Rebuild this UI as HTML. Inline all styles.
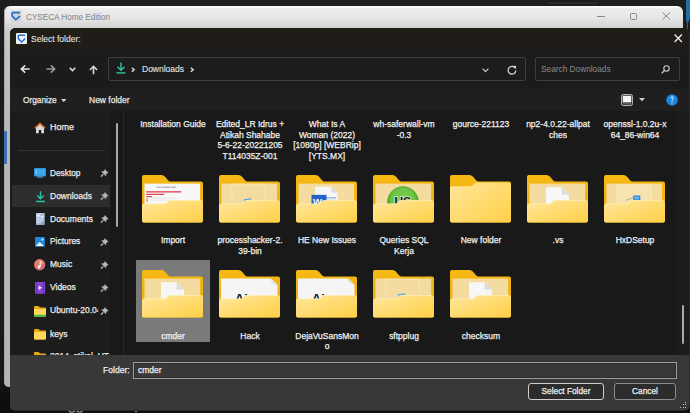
<!DOCTYPE html>
<html><head><meta charset="utf-8"><style>
html,body{margin:0;padding:0;width:690px;height:413px;overflow:hidden;background:#1b1b1b;}
.r{position:absolute;display:block;}
.t{position:absolute;white-space:nowrap;line-height:1;font-family:"Liberation Sans", sans-serif;-webkit-text-stroke:0.25px currentColor;}
svg.r{overflow:visible;}
</style></head><body>
<div class="r" style="left:0px;top:0px;width:690px;height:413px;background:linear-gradient(#1e1e1e 0, #1b1b1b 30px, #191919 380px, #0e0e0e 395px, #0e0e0e);"></div>
<div class="r" style="left:548px;top:2px;width:50px;height:2px;background:#2a2a2a;"></div>
<div class="r" style="left:685.5px;top:0px;width:4.5px;height:18.5px;background:#1c70a8;"></div>
<div class="r" style="left:686.3px;top:18.5px;width:2.6px;height:3px;background:#1c6aa0;"></div>
<div class="r" style="left:686.8px;top:21.5px;width:1.6px;height:8.5px;background:#1c669a;"></div>
<div class="r" style="left:4px;top:6px;width:679px;height:381px;background:linear-gradient(#fbfbfb 0,#fbfbfb 1px,#ececec 3px,#e6e6e6 12px,#d0d0d0 22px,#c4c4c4 40px,#b7b9b9 120px,#b3b5b5);border-radius:6px 6px 5px 5px;box-shadow:inset 1px 0 0 #a8a8a8;"></div>
<div class="r" style="left:4px;top:131px;width:3px;height:33px;background:#3d6fb5;"></div>
<svg class="r" style="left:11px;top:11px" width="10" height="10.5" viewBox="0 0 10 10.5"><rect x="-0.5" y="-0.5" width="11" height="11" rx="1" fill="#d4d4d4"/><path d="M1.2 1.7 H9 M1.2 1.7 V5 L4.7 8.6 L9 5.1" stroke="#1a6fcf" stroke-width="1.7" fill="none" stroke-linejoin="miter"/></svg>
<div class="t" style="left:26.00px;top:11.62px;font-size:9.78px;color:#8a8a8a;transform:scaleX(0.8333);transform-origin:left 50%;-webkit-text-stroke:0.1px currentColor;">CYSECA Home Edition</div>
<div class="r" style="left:597px;top:16px;width:7.5px;height:1px;background:#8a8a8a;"></div>
<div class="r" style="left:629.5px;top:12.5px;width:7px;height:7px;background:transparent;border:1px solid #8a8a8a;border-radius:1.5px;box-sizing:border-box;"></div>
<svg class="r" style="left:662px;top:12px" width="8.5" height="8" viewBox="0 0 8.5 8"><path d="M0.5 0.5 L8 7.5 M8 0.5 L0.5 7.5" stroke="#8a8a8a" stroke-width="1"/></svg>
<div class="r" style="left:9.5px;top:27.5px;width:680px;height:383px;background:#2a2a2a;border-radius:6px;"></div>
<div class="r" style="left:10px;top:28px;width:678.5px;height:382px;background:#1c1c1c;border-radius:5.5px;overflow:hidden;"></div>
<div class="r" style="left:10px;top:28px;width:678.5px;height:21px;background:#201c17;border-radius:5.5px 5.5px 0 0;"></div>
<svg class="r" style="left:16px;top:32.5px" width="11" height="11" viewBox="0 0 11 11"><rect x="0" y="0" width="11" height="11" rx="1" fill="#f0f0f0"/><path d="M2.3 2.3 H9.1 M2.3 2.3 V5.6 L5.7 8.9 L9.1 5.6" stroke="#1f72d2" stroke-width="1.4" fill="none"/></svg>
<div class="t" style="left:31.30px;top:34.73px;font-size:9.18px;color:#e4e4e4;transform:scaleX(0.9259);transform-origin:left 50%;-webkit-text-stroke:0.1px currentColor;">Select folder:</div>
<svg class="r" style="left:673.5px;top:34px" width="8.5" height="8.5" viewBox="0 0 8.5 8.5"><path d="M0.6 0.6 L7.9 7.9 M7.9 0.6 L0.6 7.9" stroke="#ececec" stroke-width="1.35"/></svg>
<div class="r" style="left:10px;top:49px;width:679px;height:39.5px;background:#1b1b1b;"></div>
<svg class="r" style="left:20px;top:64px" width="10" height="10" viewBox="0 0 10 10"><path d="M9.6 5 H1.8 M5.2 1.3 L1.3 5 L5.2 8.7" stroke="#e6e6e6" stroke-width="1.6" fill="none"/></svg>
<svg class="r" style="left:45.5px;top:64px" width="10" height="10" viewBox="0 0 10 10"><path d="M0.4 5 H8.2 M4.8 1.3 L8.7 5 L4.8 8.7" stroke="#9a9a9a" stroke-width="1.6" fill="none"/></svg>
<svg class="r" style="left:68.5px;top:66.8px" width="7" height="5" viewBox="0 0 7 5"><path d="M0.7 0.8 L3.5 3.6 L6.3 0.8" stroke="#e0e0e0" stroke-width="1.5" fill="none"/></svg>
<svg class="r" style="left:88.5px;top:64.5px" width="9" height="9.5" viewBox="0 0 9 9.5"><path d="M4.5 9.3 V1.8 M0.9 5 L4.5 1.3 L8.1 5" stroke="#d8d8d8" stroke-width="1.6" fill="none"/></svg>
<div class="r" style="left:108px;top:57px;width:418px;height:24px;background:#1c1c1c;border:1.3px solid #3e3e3e;border-radius:2px;box-sizing:border-box;"></div>
<svg class="r" style="left:116px;top:62px" width="10" height="12" viewBox="0 0 10 12"><path d="M5 0.5 V8 M1.5 4.8 L5 8.3 L8.5 4.8" stroke="#2ec4a2" stroke-width="1.4" fill="none"/><rect x="0.5" y="10.2" width="9" height="1.4" fill="#2ec4a2"/></svg>
<svg class="r" style="left:131px;top:66.8px" width="4.5" height="5.5" viewBox="0 0 4.5 5.5"><path d="M0.8 0.7 L3.2 2.75 L0.8 4.8" stroke="#e0e0e0" stroke-width="1.4" fill="none"/></svg>
<div class="t" style="left:141.50px;top:64.83px;font-size:9.18px;color:#e4e4e4;transform:scaleX(0.9259);transform-origin:left 50%;-webkit-text-stroke:0.1px currentColor;">Downloads</div>
<svg class="r" style="left:189.5px;top:66.8px" width="4.5" height="5.5" viewBox="0 0 4.5 5.5"><path d="M0.8 0.7 L3.2 2.75 L0.8 4.8" stroke="#e0e0e0" stroke-width="1.4" fill="none"/></svg>
<svg class="r" style="left:481.5px;top:67.5px" width="7" height="4.5" viewBox="0 0 7 4.5"><path d="M0.6 0.6 L3.5 3.6 L6.4 0.6" stroke="#cfcfcf" stroke-width="1.1" fill="none"/></svg>
<svg class="r" style="left:506.5px;top:64.5px" width="10" height="10" viewBox="0 0 10 10"><path d="M8.3 3.2 A3.9 3.9 0 1 0 8.9 5.5" stroke="#d8d8d8" stroke-width="1.2" fill="none"/><path d="M6.2 0.8 L9.2 0.9 L9 3.9 Z" fill="#d8d8d8"/></svg>
<div class="r" style="left:535px;top:57px;width:145px;height:24px;background:#1c1c1c;border:1.3px solid #3e3e3e;border-radius:2px;box-sizing:border-box;"></div>
<div class="t" style="left:541.20px;top:64.61px;font-size:8.96px;color:#8a8a8a;transform:scaleX(0.9259);transform-origin:left 50%;-webkit-text-stroke:0;">Search Downloads</div>
<svg class="r" style="left:660.5px;top:65px" width="9" height="9" viewBox="0 0 9 9"><circle cx="5.5" cy="3.5" r="2.7" stroke="#cfcfcf" stroke-width="1.1" fill="none"/><path d="M3.6 5.4 L0.8 8.2" stroke="#cfcfcf" stroke-width="1.3"/></svg>
<div class="r" style="left:10px;top:88.5px;width:679px;height:22.5px;background:#1f1f1f;"></div>
<div class="t" style="left:22.90px;top:95.61px;font-size:8.96px;color:#e8e8e8;transform:scaleX(0.9259);transform-origin:left 50%;">Organize</div>
<svg class="r" style="left:61px;top:98.5px" width="5.5" height="3.5" viewBox="0 0 5.5 3.5"><path d="M0 0 H5.5 L2.75 3.2 Z" fill="#cfcfcf"/></svg>
<div class="t" style="left:88.50px;top:95.83px;font-size:9.18px;color:#e8e8e8;transform:scaleX(0.9259);transform-origin:left 50%;">New folder</div>
<svg class="r" style="left:621px;top:94px" width="12" height="12" viewBox="0 0 12 12"><rect x="0.5" y="0.5" width="11" height="11" rx="1.8" fill="#3a3a3a" stroke="#b4b4b4" stroke-width="1"/><rect x="1.8" y="1.8" width="8.4" height="6.6" fill="#f6f6f6"/><rect x="1.8" y="8.6" width="8.4" height="1.6" fill="#5c5c5c"/></svg>
<svg class="r" style="left:639px;top:98.3px" width="6" height="3.5" viewBox="0 0 6 3.5"><path d="M0 0 H6 L3 3.3 Z" fill="#d0d0d0"/></svg>
<svg class="r" style="left:666px;top:94px" width="12" height="12" viewBox="0 0 12 12"><circle cx="6" cy="6" r="5.8" fill="#1a86e0"/><path d="M4.6 4.4 Q4.6 2.9 6 2.9 Q7.4 2.9 7.4 4.2 Q7.4 5.1 6.5 5.6 Q6 5.9 6 6.8 V7.3" stroke="#fff" stroke-width="0.95" fill="none"/><circle cx="6" cy="8.8" r="0.6" fill="#fff"/></svg>
<div class="r" style="left:10px;top:111px;width:99.5px;height:244px;background:#1c1c1c;"></div>
<div class="r" style="left:109.5px;top:111px;width:13.5px;height:244px;background:#191919;"></div>
<div class="r" style="left:123px;top:111px;width:1px;height:244px;background:#262626;"></div>
<div class="r" style="left:116px;top:123px;width:1.7px;height:104px;background:#a9a9a9;border-radius:1px;"></div>
<div class="r" style="left:124px;top:111px;width:565px;height:244px;background:#191919;"></div>
<div class="r" style="left:676px;top:111px;width:12px;height:244px;background:#1c1c1c;"></div>
<div class="r" style="left:682px;top:304.5px;width:1.8px;height:39px;background:#a9a9a9;border-radius:1px;"></div>
<svg class="r" style="left:34px;top:121.5px" width="12" height="11.5" viewBox="0 0 12 11.5"><path d="M6 0.5 L11.7 5.8 L10.6 6.8 L6 2.6 L1.4 6.8 L0.3 5.8 Z" fill="#e8782a"/><path d="M2 6 L6 2.6 L10 6 V11.3 H7.2 V8 H4.8 V11.3 H2 Z" fill="#d8d8d8"/></svg>
<div class="t" style="left:49.70px;top:122.07px;font-size:9.72px;color:#ececec;transform:scaleX(0.9259);transform-origin:left 50%;">Home</div>
<div class="r" style="left:17.5px;top:150px;width:87px;height:1px;background:#333333;"></div>
<svg class="r" style="left:34px;top:168px" width="12" height="9.5" viewBox="0 0 12 9.5"><rect x="0" y="0" width="12" height="8.5" rx="1" fill="#2d8fd8"/><rect x="0.8" y="0.8" width="10.4" height="6.9" fill="#3aa6ee"/><rect x="1.8" y="2.2" width="1" height="1" fill="#fff"/><rect x="1.8" y="4.2" width="1" height="1" fill="#fff"/><rect x="3" y="8.5" width="6" height="1" fill="#6bb5e8"/></svg>
<div class="t" style="left:49.70px;top:168.71px;font-size:8.96px;color:#ececec;transform:scaleX(0.9259);transform-origin:left 50%;">Desktop</div>
<svg class="r" style="left:100px;top:168.6px" width="8.5" height="8.5" viewBox="0 0 8.5 8.5"><path d="M4.9 0.6 L8.1 3.8 L6.9 4.3 L5.8 5.6 L5.9 7 L1.6 2.7 L3 2.8 L4.3 1.7 Z" fill="#b4b8ba" stroke="#b4b8ba" stroke-width="0.5" stroke-linejoin="round"/><path d="M3.3 5.3 L0.9 7.7" stroke="#aeb2b4" stroke-width="1.3"/></svg>
<div class="r" style="left:11.6px;top:184.8px;width:98.1px;height:22.6px;background:#2d2d2d;"></div>
<svg class="r" style="left:36px;top:190.5px" width="9" height="11.5" viewBox="0 0 9 11.5"><path d="M4.5 0.3 V7.5 M1.2 4.4 L4.5 7.7 L7.8 4.4" stroke="#2ec4a2" stroke-width="1.4" fill="none"/><rect x="0" y="9.7" width="9" height="1.5" fill="#2ec4a2"/></svg>
<div class="t" style="left:49.70px;top:191.63px;font-size:9.18px;color:#ececec;transform:scaleX(0.9259);transform-origin:left 50%;">Downloads</div>
<svg class="r" style="left:100px;top:191.6px" width="8.5" height="8.5" viewBox="0 0 8.5 8.5"><path d="M4.9 0.6 L8.1 3.8 L6.9 4.3 L5.8 5.6 L5.9 7 L1.6 2.7 L3 2.8 L4.3 1.7 Z" fill="#b4b8ba" stroke="#b4b8ba" stroke-width="0.5" stroke-linejoin="round"/><path d="M3.3 5.3 L0.9 7.7" stroke="#aeb2b4" stroke-width="1.3"/></svg>
<svg class="r" style="left:35.9px;top:212.9px" width="8.8" height="12" viewBox="0 0 8.8 12"><defs><linearGradient id="dg" x1="0" y1="0" x2="1" y2="1"><stop offset="0" stop-color="#c4d6e8"/><stop offset="1" stop-color="#7f9cb8"/></linearGradient></defs><rect x="0" y="0" width="8.8" height="12" rx="0.8" fill="url(#dg)"/><rect x="1.2" y="1.6" width="2.6" height="2" fill="#eef4fa"/><rect x="4.8" y="2.8" width="2.8" height="1.6" fill="#eef4fa"/><rect x="1.2" y="5.4" width="6.4" height="0.9" fill="#dfe9f3"/><rect x="1.2" y="7.3" width="6.4" height="0.9" fill="#dfe9f3"/><rect x="1.2" y="9.2" width="4" height="0.9" fill="#dfe9f3"/></svg>
<div class="t" style="left:49.70px;top:214.53px;font-size:9.18px;color:#ececec;transform:scaleX(0.9259);transform-origin:left 50%;">Documents</div>
<svg class="r" style="left:100px;top:214.6px" width="8.5" height="8.5" viewBox="0 0 8.5 8.5"><path d="M4.9 0.6 L8.1 3.8 L6.9 4.3 L5.8 5.6 L5.9 7 L1.6 2.7 L3 2.8 L4.3 1.7 Z" fill="#b4b8ba" stroke="#b4b8ba" stroke-width="0.5" stroke-linejoin="round"/><path d="M3.3 5.3 L0.9 7.7" stroke="#aeb2b4" stroke-width="1.3"/></svg>
<svg class="r" style="left:35.4px;top:237.2px" width="9.8" height="9.8" viewBox="0 0 9.8 9.8"><rect x="0" y="0" width="9.8" height="9.8" rx="0.8" fill="#1f88e0"/><path d="M0.8 9 L4.6 4.9 L8.9 9 Z" fill="#f4f9fd"/><circle cx="7.4" cy="2.4" r="1" fill="#f4f9fd"/></svg>
<div class="t" style="left:49.70px;top:237.32px;font-size:9.07px;color:#ececec;transform:scaleX(0.9259);transform-origin:left 50%;">Pictures</div>
<svg class="r" style="left:100px;top:237.6px" width="8.5" height="8.5" viewBox="0 0 8.5 8.5"><path d="M4.9 0.6 L8.1 3.8 L6.9 4.3 L5.8 5.6 L5.9 7 L1.6 2.7 L3 2.8 L4.3 1.7 Z" fill="#b4b8ba" stroke="#b4b8ba" stroke-width="0.5" stroke-linejoin="round"/><path d="M3.3 5.3 L0.9 7.7" stroke="#aeb2b4" stroke-width="1.3"/></svg>
<svg class="r" style="left:34.4px;top:258.9px" width="11.4" height="11.6" viewBox="0 0 11.4 11.6"><defs><linearGradient id="mg" x1="0" y1="0" x2="1" y2="1"><stop offset="0" stop-color="#f48a5c"/><stop offset="0.55" stop-color="#e07470"/><stop offset="1" stop-color="#b8609a"/></linearGradient></defs><ellipse cx="5.7" cy="5.8" rx="5.6" ry="5.7" fill="url(#mg)"/><path d="M6.2 2.2 V7.6" stroke="#fff" stroke-width="1"/><circle cx="5.1" cy="7.9" r="1.35" fill="#fff"/><path d="M6.2 2.3 Q7.9 2.9 7.9 4.6" stroke="#fff" stroke-width="0.9" fill="none"/></svg>
<div class="t" style="left:49.70px;top:260.33px;font-size:9.18px;color:#ececec;transform:scaleX(0.9259);transform-origin:left 50%;">Music</div>
<svg class="r" style="left:100px;top:260.6px" width="8.5" height="8.5" viewBox="0 0 8.5 8.5"><path d="M4.9 0.6 L8.1 3.8 L6.9 4.3 L5.8 5.6 L5.9 7 L1.6 2.7 L3 2.8 L4.3 1.7 Z" fill="#b4b8ba" stroke="#b4b8ba" stroke-width="0.5" stroke-linejoin="round"/><path d="M3.3 5.3 L0.9 7.7" stroke="#aeb2b4" stroke-width="1.3"/></svg>
<svg class="r" style="left:34.9px;top:281.7px" width="10.2" height="11.7" viewBox="0 0 10.2 11.7"><rect x="0" y="0" width="10.2" height="11.7" rx="0.8" fill="#8446d8"/><rect x="0.9" y="1.2" width="1.4" height="1.4" fill="#5a22a8"/><rect x="0.9" y="4" width="1.4" height="1.4" fill="#5a22a8"/><rect x="0.9" y="6.8" width="1.4" height="1.4" fill="#5a22a8"/><rect x="0.9" y="9.4" width="1.4" height="1.4" fill="#5a22a8"/><rect x="7.9" y="1.2" width="1.4" height="1.4" fill="#5a22a8"/><rect x="7.9" y="4" width="1.4" height="1.4" fill="#5a22a8"/><rect x="7.9" y="6.8" width="1.4" height="1.4" fill="#5a22a8"/><rect x="7.9" y="9.4" width="1.4" height="1.4" fill="#5a22a8"/><path d="M3.6 3.6 L7 5.85 L3.6 8.1 Z" fill="#f2ecfb"/></svg>
<div class="t" style="left:49.70px;top:283.43px;font-size:9.18px;color:#ececec;transform:scaleX(0.9259);transform-origin:left 50%;">Videos</div>
<svg class="r" style="left:100px;top:283.6px" width="8.5" height="8.5" viewBox="0 0 8.5 8.5"><path d="M4.9 0.6 L8.1 3.8 L6.9 4.3 L5.8 5.6 L5.9 7 L1.6 2.7 L3 2.8 L4.3 1.7 Z" fill="#b4b8ba" stroke="#b4b8ba" stroke-width="0.5" stroke-linejoin="round"/><path d="M3.3 5.3 L0.9 7.7" stroke="#aeb2b4" stroke-width="1.3"/></svg>
<svg class="r" style="left:34.2px;top:305.5px" width="12" height="10.5" viewBox="0 0 12 10.5"><path d="M0 1 Q0 0 1 0 H4.5 L6 1.5 H11 Q12 1.5 12 2.5 V9.5 Q12 10.5 11 10.5 H1 Q0 10.5 0 9.5 Z" fill="#e9a915"/><path d="M0 3 H12 V9.5 Q12 10.5 11 10.5 H1 Q0 10.5 0 9.5 Z" fill="#ffd55c"/><rect x="0" y="8.8" width="12" height="1.7" fill="#35c24a"/></svg>
<div class="t" style="left:49.70px;top:306.43px;font-size:9.18px;color:#ececec;transform:scaleX(0.9259);transform-origin:left 50%;width:52.2px;overflow:hidden;">Ubuntu-20.04</div>
<svg class="r" style="left:100px;top:306.6px" width="8.5" height="8.5" viewBox="0 0 8.5 8.5"><path d="M4.9 0.6 L8.1 3.8 L6.9 4.3 L5.8 5.6 L5.9 7 L1.6 2.7 L3 2.8 L4.3 1.7 Z" fill="#b4b8ba" stroke="#b4b8ba" stroke-width="0.5" stroke-linejoin="round"/><path d="M3.3 5.3 L0.9 7.7" stroke="#aeb2b4" stroke-width="1.3"/></svg>
<svg class="r" style="left:34.2px;top:328.5px" width="12" height="10.5" viewBox="0 0 12 10.5"><path d="M0 1 Q0 0 1 0 H4.5 L6 1.5 H11 Q12 1.5 12 2.5 V9.5 Q12 10.5 11 10.5 H1 Q0 10.5 0 9.5 Z" fill="#e9a915"/><path d="M0 3 H12 V9.5 Q12 10.5 11 10.5 H1 Q0 10.5 0 9.5 Z" fill="#ffd55c"/></svg>
<div class="t" style="left:49.70px;top:329.63px;font-size:9.18px;color:#ececec;transform:scaleX(0.9259);transform-origin:left 50%;">keys</div>
<svg class="r" style="left:34.2px;top:351.5px" width="12" height="10.5" viewBox="0 0 12 10.5"><path d="M0 1 Q0 0 1 0 H4.5 L6 1.5 H11 Q12 1.5 12 2.5 V9.5 Q12 10.5 11 10.5 H1 Q0 10.5 0 9.5 Z" fill="#e9a915"/><path d="M0 3 H12 V9.5 Q12 10.5 11 10.5 H1 Q0 10.5 0 9.5 Z" fill="#ffd55c"/></svg>
<div class="t" style="left:49.70px;top:351.93px;font-size:9.18px;color:#ececec;transform:scaleX(0.9259);transform-origin:left 50%;width:64px;overflow:hidden;">2014_stikal_UTB</div>
<div class="t" style="left:72.80px;width:200px;text-align:center;top:119.73px;font-size:9.18px;color:#f2f2f2;transform:scaleX(0.9259);transform-origin:center 50%;">Installation Guide</div>
<div class="t" style="left:149.80px;width:200px;text-align:center;top:119.73px;font-size:9.18px;color:#f2f2f2;transform:scaleX(0.9259);transform-origin:center 50%;">Edited_LR Idrus +</div>
<div class="t" style="left:149.80px;width:200px;text-align:center;top:131.23px;font-size:9.18px;color:#f2f2f2;transform:scaleX(0.9259);transform-origin:center 50%;">Atikah Shahabe</div>
<div class="t" style="left:149.80px;width:200px;text-align:center;top:140.73px;font-size:9.18px;color:#f2f2f2;transform:scaleX(0.9259);transform-origin:center 50%;">5-6-22-20221205</div>
<div class="t" style="left:149.80px;width:200px;text-align:center;top:152.23px;font-size:9.18px;color:#f2f2f2;transform:scaleX(0.9259);transform-origin:center 50%;">T114035Z-001</div>
<div class="t" style="left:226.80px;width:200px;text-align:center;top:119.73px;font-size:9.18px;color:#f2f2f2;transform:scaleX(0.9259);transform-origin:center 50%;">What Is A</div>
<div class="t" style="left:226.80px;width:200px;text-align:center;top:131.23px;font-size:9.18px;color:#f2f2f2;transform:scaleX(0.9259);transform-origin:center 50%;">Woman (2022)</div>
<div class="t" style="left:226.80px;width:200px;text-align:center;top:140.73px;font-size:9.18px;color:#f2f2f2;transform:scaleX(0.9259);transform-origin:center 50%;">[1080p] [WEBRip]</div>
<div class="t" style="left:226.80px;width:200px;text-align:center;top:152.23px;font-size:9.18px;color:#f2f2f2;transform:scaleX(0.9259);transform-origin:center 50%;">[YTS.MX]</div>
<div class="t" style="left:303.80px;width:200px;text-align:center;top:119.73px;font-size:9.18px;color:#f2f2f2;transform:scaleX(0.9259);transform-origin:center 50%;">wh-saferwall-vm</div>
<div class="t" style="left:303.80px;width:200px;text-align:center;top:131.23px;font-size:9.18px;color:#f2f2f2;transform:scaleX(0.9259);transform-origin:center 50%;">-0.3</div>
<div class="t" style="left:380.80px;width:200px;text-align:center;top:119.73px;font-size:9.18px;color:#f2f2f2;transform:scaleX(0.9259);transform-origin:center 50%;">gource-221123</div>
<div class="t" style="left:457.80px;width:200px;text-align:center;top:119.73px;font-size:9.18px;color:#f2f2f2;transform:scaleX(0.9259);transform-origin:center 50%;">np2-4.0.22-allpat</div>
<div class="t" style="left:457.80px;width:200px;text-align:center;top:131.23px;font-size:9.18px;color:#f2f2f2;transform:scaleX(0.9259);transform-origin:center 50%;">ches</div>
<div class="t" style="left:534.80px;width:200px;text-align:center;top:119.73px;font-size:9.18px;color:#f2f2f2;transform:scaleX(0.9259);transform-origin:center 50%;">openssl-1.0.2u-x</div>
<div class="t" style="left:534.80px;width:200px;text-align:center;top:131.23px;font-size:9.18px;color:#f2f2f2;transform:scaleX(0.9259);transform-origin:center 50%;">64_86-win64</div>
<svg class="r" style="left:142.3px;top:174.65px" width="61" height="47.6" viewBox="0 0 61 47" preserveAspectRatio="none"><defs><linearGradient id="fr1" x1="0" y1="0" x2="1" y2="1"><stop offset="0" stop-color="#ffe79c"/><stop offset="1" stop-color="#ffcf45"/></linearGradient><linearGradient id="bk1" x1="0" y1="0" x2="0" y2="1"><stop offset="0" stop-color="#f6b914"/><stop offset="1" stop-color="#ecaa0c"/></linearGradient></defs><path d="M0 2 Q0 0 2 0 H19.5 Q21.5 0 22.8 1.6 L26 5.3 Q27 6.5 28.5 6.5 H59 Q61 6.5 61 8.5 V45 Q61 47 59 47 H2 Q0 47 0 45 Z" fill="url(#bk1)"/><rect x="2.5" y="8.5" width="55.6" height="22" fill="#f8f8f8"/><rect x="14.5" y="11.6" width="5" height="0.8" fill="#8a8a8a"/><rect x="20.3" y="11.6" width="8" height="0.8" fill="#8a8a8a"/><rect x="29.1" y="11.6" width="5" height="0.8" fill="#8a8a8a"/><rect x="4.2" y="16" width="35" height="1.3" fill="#e4404e"/><rect x="4.2" y="18.5" width="18" height="1.2" fill="#e4404e"/><rect x="4.2" y="20.8" width="6" height="1.1" fill="#e4404e"/><rect x="4.2" y="23" width="1.5" height="3.5" fill="#ea8a90"/><rect x="8" y="22.5" width="26" height="0.7" fill="#dddddd"/><rect x="8" y="24.5" width="22" height="0.7" fill="#e2e2e2"/><path d="M0 30.3 Q0 28.3 2 28.3 H22.5 Q24 28.3 25 27 L25.6 26.2 Q26.6 25 28.2 25 H59 Q61 25 61 27 V45 Q61 47 59 47 H2 Q0 47 0 45 Z" fill="url(#fr1)"/><path d="M2 28.6 H22.5 Q24 28.6 25 27.3 L25.6 26.5 Q26.6 25.3 28.2 25.3 H59" stroke="#fff2c0" stroke-width="0.7" fill="none"/></svg>
<div class="t" style="left:72.80px;width:200px;text-align:center;top:236.03px;font-size:9.18px;color:#f2f2f2;transform:scaleX(0.9259);transform-origin:center 50%;">Import</div>
<svg class="r" style="left:219.3px;top:174.65px" width="61" height="47.6" viewBox="0 0 61 47" preserveAspectRatio="none"><defs><linearGradient id="fr2" x1="0" y1="0" x2="1" y2="1"><stop offset="0" stop-color="#ffe79c"/><stop offset="1" stop-color="#ffcf45"/></linearGradient><linearGradient id="bk2" x1="0" y1="0" x2="0" y2="1"><stop offset="0" stop-color="#f6b914"/><stop offset="1" stop-color="#ecaa0c"/></linearGradient></defs><path d="M0 2 Q0 0 2 0 H19.5 Q21.5 0 22.8 1.6 L26 5.3 Q27 6.5 28.5 6.5 H59 Q61 6.5 61 8.5 V45 Q61 47 59 47 H2 Q0 47 0 45 Z" fill="url(#bk2)"/><rect x="2.5" y="8.5" width="55.6" height="22" fill="#f4dca0"/><rect x="13" y="9" width="33" height="21" fill="none" stroke="#f7e7bb" stroke-width="0.8"/><path d="M25 24 L32 23 L33 29 L26 30 Z" fill="#5aa0d0"/><path d="M26 25 L31.5 24.3 L32 26 L26.5 26.5 Z" fill="#cfe6f5"/><path d="M0 30.3 Q0 28.3 2 28.3 H22.5 Q24 28.3 25 27 L25.6 26.2 Q26.6 25 28.2 25 H59 Q61 25 61 27 V45 Q61 47 59 47 H2 Q0 47 0 45 Z" fill="url(#fr2)"/><path d="M2 28.6 H22.5 Q24 28.6 25 27.3 L25.6 26.5 Q26.6 25.3 28.2 25.3 H59" stroke="#fff2c0" stroke-width="0.7" fill="none"/></svg>
<div class="t" style="left:149.80px;width:200px;text-align:center;top:236.03px;font-size:9.18px;color:#f2f2f2;transform:scaleX(0.9259);transform-origin:center 50%;">processhacker-2.</div>
<div class="t" style="left:149.80px;width:200px;text-align:center;top:246.53px;font-size:9.18px;color:#f2f2f2;transform:scaleX(0.9259);transform-origin:center 50%;">39-bin</div>
<svg class="r" style="left:296.3px;top:174.65px" width="61" height="47.6" viewBox="0 0 61 47" preserveAspectRatio="none"><defs><linearGradient id="fr3" x1="0" y1="0" x2="1" y2="1"><stop offset="0" stop-color="#ffe79c"/><stop offset="1" stop-color="#ffcf45"/></linearGradient><linearGradient id="bk3" x1="0" y1="0" x2="0" y2="1"><stop offset="0" stop-color="#f6b914"/><stop offset="1" stop-color="#ecaa0c"/></linearGradient></defs><path d="M0 2 Q0 0 2 0 H19.5 Q21.5 0 22.8 1.6 L26 5.3 Q27 6.5 28.5 6.5 H59 Q61 6.5 61 8.5 V45 Q61 47 59 47 H2 Q0 47 0 45 Z" fill="url(#bk3)"/><rect x="2.5" y="8.5" width="55.6" height="22" fill="#f4dca0"/><path d="M19.2 11.6 H35.5 L41.5 17.6 V30 H19.2 Z" fill="#f7f7f7"/><path d="M35.5 11.6 V17.6 H41.5" fill="#dcdcdc"/><rect x="30" y="22" width="10" height="1" fill="#6da2d8"/><rect x="30" y="24.5" width="10" height="1" fill="#6da2d8"/><rect x="15.5" y="19.6" width="15" height="11" fill="#2763c4"/><text x="17" y="29.8" font-family="Liberation Sans" font-weight="bold" font-size="9.5" fill="#fff">W</text><path d="M0 30.3 Q0 28.3 2 28.3 H22.5 Q24 28.3 25 27 L25.6 26.2 Q26.6 25 28.2 25 H59 Q61 25 61 27 V45 Q61 47 59 47 H2 Q0 47 0 45 Z" fill="url(#fr3)"/><path d="M2 28.6 H22.5 Q24 28.6 25 27.3 L25.6 26.5 Q26.6 25.3 28.2 25.3 H59" stroke="#fff2c0" stroke-width="0.7" fill="none"/></svg>
<div class="t" style="left:226.80px;width:200px;text-align:center;top:236.03px;font-size:9.18px;color:#f2f2f2;transform:scaleX(0.9259);transform-origin:center 50%;">HE New Issues</div>
<svg class="r" style="left:373.3px;top:174.65px" width="61" height="47.6" viewBox="0 0 61 47" preserveAspectRatio="none"><defs><linearGradient id="fr4" x1="0" y1="0" x2="1" y2="1"><stop offset="0" stop-color="#ffe79c"/><stop offset="1" stop-color="#ffcf45"/></linearGradient><linearGradient id="bk4" x1="0" y1="0" x2="0" y2="1"><stop offset="0" stop-color="#f6b914"/><stop offset="1" stop-color="#ecaa0c"/></linearGradient></defs><path d="M0 2 Q0 0 2 0 H19.5 Q21.5 0 22.8 1.6 L26 5.3 Q27 6.5 28.5 6.5 H59 Q61 6.5 61 8.5 V45 Q61 47 59 47 H2 Q0 47 0 45 Z" fill="url(#bk4)"/><rect x="2.5" y="8.5" width="55.6" height="22" fill="#f4dca0"/><radialGradient id="gg4" cx="0.5" cy="0.45" r="0.55"><stop offset="0" stop-color="#7fd052"/><stop offset="0.7" stop-color="#6cc444"/><stop offset="1" stop-color="#2f8c1c"/></radialGradient><circle cx="30" cy="27" r="15.8" fill="url(#gg4)"/><text x="21.4" y="30.4" font-family="Liberation Sans" font-weight="bold" font-size="12" fill="#111" stroke="#e8f4e0" stroke-width="1.4" paint-order="stroke">US</text><path d="M0 30.3 Q0 28.3 2 28.3 H22.5 Q24 28.3 25 27 L25.6 26.2 Q26.6 25 28.2 25 H59 Q61 25 61 27 V45 Q61 47 59 47 H2 Q0 47 0 45 Z" fill="url(#fr4)"/><path d="M2 28.6 H22.5 Q24 28.6 25 27.3 L25.6 26.5 Q26.6 25.3 28.2 25.3 H59" stroke="#fff2c0" stroke-width="0.7" fill="none"/></svg>
<div class="t" style="left:303.80px;width:200px;text-align:center;top:236.03px;font-size:9.18px;color:#f2f2f2;transform:scaleX(0.9259);transform-origin:center 50%;">Queries SQL</div>
<div class="t" style="left:303.80px;width:200px;text-align:center;top:246.53px;font-size:9.18px;color:#f2f2f2;transform:scaleX(0.9259);transform-origin:center 50%;">Kerja</div>
<svg class="r" style="left:450.3px;top:174.65px" width="61" height="47.6" viewBox="0 0 61 47" preserveAspectRatio="none"><defs><linearGradient id="fr5" x1="0" y1="0" x2="1" y2="1"><stop offset="0" stop-color="#ffe79c"/><stop offset="1" stop-color="#ffcf45"/></linearGradient><linearGradient id="bk5" x1="0" y1="0" x2="0" y2="1"><stop offset="0" stop-color="#f6b914"/><stop offset="1" stop-color="#ecaa0c"/></linearGradient></defs><path d="M0 2 Q0 0 2 0 H19.5 Q21.5 0 22.8 1.6 L26 5.3 Q27 6.5 28.5 6.5 H59 Q61 6.5 61 8.5 V45 Q61 47 59 47 H2 Q0 47 0 45 Z" fill="url(#bk5)"/><path d="M0 13 Q0 11 2 11 H20.7 Q22.2 11 23.5 9.5 L24.7 8.3 Q25.7 7.5 27.2 7.5 H59 Q61 7.5 61 9.5 V45 Q61 47 59 47 H2 Q0 47 0 45 Z" fill="url(#fr5)"/></svg>
<div class="t" style="left:380.80px;width:200px;text-align:center;top:236.03px;font-size:9.18px;color:#f2f2f2;transform:scaleX(0.9259);transform-origin:center 50%;">New folder</div>
<svg class="r" style="left:527.3px;top:174.65px" width="61" height="47.6" viewBox="0 0 61 47" preserveAspectRatio="none"><defs><linearGradient id="fr6" x1="0" y1="0" x2="1" y2="1"><stop offset="0" stop-color="#ffe79c"/><stop offset="1" stop-color="#ffcf45"/></linearGradient><linearGradient id="bk6" x1="0" y1="0" x2="0" y2="1"><stop offset="0" stop-color="#f6b914"/><stop offset="1" stop-color="#ecaa0c"/></linearGradient></defs><path d="M0 2 Q0 0 2 0 H19.5 Q21.5 0 22.8 1.6 L26 5.3 Q27 6.5 28.5 6.5 H59 Q61 6.5 61 8.5 V45 Q61 47 59 47 H2 Q0 47 0 45 Z" fill="url(#bk6)"/><rect x="2.5" y="8.5" width="55.6" height="22" fill="#f4dca0"/><path d="M19 12 H35 L42 19 V30 H19 Z" fill="#f7f7f7"/><path d="M35 12 V19 H42" fill="#dedede" stroke="#cfcfcf" stroke-width="0.4"/><path d="M0 30.3 Q0 28.3 2 28.3 H22.5 Q24 28.3 25 27 L25.6 26.2 Q26.6 25 28.2 25 H59 Q61 25 61 27 V45 Q61 47 59 47 H2 Q0 47 0 45 Z" fill="url(#fr6)"/><path d="M2 28.6 H22.5 Q24 28.6 25 27.3 L25.6 26.5 Q26.6 25.3 28.2 25.3 H59" stroke="#fff2c0" stroke-width="0.7" fill="none"/></svg>
<div class="t" style="left:457.80px;width:200px;text-align:center;top:236.03px;font-size:9.18px;color:#f2f2f2;transform:scaleX(0.9259);transform-origin:center 50%;">.vs</div>
<svg class="r" style="left:604.3px;top:174.65px" width="61" height="47.6" viewBox="0 0 61 47" preserveAspectRatio="none"><defs><linearGradient id="fr7" x1="0" y1="0" x2="1" y2="1"><stop offset="0" stop-color="#ffe79c"/><stop offset="1" stop-color="#ffcf45"/></linearGradient><linearGradient id="bk7" x1="0" y1="0" x2="0" y2="1"><stop offset="0" stop-color="#f6b914"/><stop offset="1" stop-color="#ecaa0c"/></linearGradient></defs><path d="M0 2 Q0 0 2 0 H19.5 Q21.5 0 22.8 1.6 L26 5.3 Q27 6.5 28.5 6.5 H59 Q61 6.5 61 8.5 V45 Q61 47 59 47 H2 Q0 47 0 45 Z" fill="url(#bk7)"/><rect x="2.5" y="8.5" width="55.6" height="22" fill="#f4dca0"/><rect x="13.3" y="9.9" width="34" height="21" fill="#f6e3b0" stroke="#f9ecc6" stroke-width="0.8"/><path d="M22 25 L29.5 22.5" stroke="#8a8a9a" stroke-width="0.6"/><rect x="29.3" y="20.3" width="7" height="4.8" fill="#1e7ad8"/><rect x="30.3" y="21.2" width="5" height="3" fill="#5fb4f0"/><path d="M0 30.3 Q0 28.3 2 28.3 H22.5 Q24 28.3 25 27 L25.6 26.2 Q26.6 25 28.2 25 H59 Q61 25 61 27 V45 Q61 47 59 47 H2 Q0 47 0 45 Z" fill="url(#fr7)"/><path d="M2 28.6 H22.5 Q24 28.6 25 27.3 L25.6 26.5 Q26.6 25.3 28.2 25.3 H59" stroke="#fff2c0" stroke-width="0.7" fill="none"/></svg>
<div class="t" style="left:534.80px;width:200px;text-align:center;top:236.03px;font-size:9.18px;color:#f2f2f2;transform:scaleX(0.9259);transform-origin:center 50%;">HxDSetup</div>
<div class="r" style="left:135.5px;top:259.7px;width:74px;height:82.3px;background:#7a7a7a;"></div>
<svg class="r" style="left:142.3px;top:269.95px" width="61" height="47.6" viewBox="0 0 61 47" preserveAspectRatio="none"><defs><linearGradient id="fr8" x1="0" y1="0" x2="1" y2="1"><stop offset="0" stop-color="#ffe79c"/><stop offset="1" stop-color="#ffcf45"/></linearGradient><linearGradient id="bk8" x1="0" y1="0" x2="0" y2="1"><stop offset="0" stop-color="#f6b914"/><stop offset="1" stop-color="#ecaa0c"/></linearGradient></defs><path d="M0 2 Q0 0 2 0 H19.5 Q21.5 0 22.8 1.6 L26 5.3 Q27 6.5 28.5 6.5 H59 Q61 6.5 61 8.5 V45 Q61 47 59 47 H2 Q0 47 0 45 Z" fill="url(#bk8)"/><rect x="2.5" y="8.5" width="55.6" height="22" fill="#f4dca0"/><path d="M19 12 H35 L42 19 V30 H19 Z" fill="#f7f7f7"/><path d="M35 12 V19 H42" fill="#dedede" stroke="#cfcfcf" stroke-width="0.4"/><path d="M0 30.3 Q0 28.3 2 28.3 H22.5 Q24 28.3 25 27 L25.6 26.2 Q26.6 25 28.2 25 H59 Q61 25 61 27 V45 Q61 47 59 47 H2 Q0 47 0 45 Z" fill="url(#fr8)"/><path d="M2 28.6 H22.5 Q24 28.6 25 27.3 L25.6 26.5 Q26.6 25.3 28.2 25.3 H59" stroke="#fff2c0" stroke-width="0.7" fill="none"/></svg>
<div class="t" style="left:72.80px;width:200px;text-align:center;top:331.63px;font-size:9.18px;color:#f2f2f2;transform:scaleX(0.9259);transform-origin:center 50%;">cmder</div>
<svg class="r" style="left:219.3px;top:269.95px" width="61" height="47.6" viewBox="0 0 61 47" preserveAspectRatio="none"><defs><linearGradient id="fr9" x1="0" y1="0" x2="1" y2="1"><stop offset="0" stop-color="#ffe79c"/><stop offset="1" stop-color="#ffcf45"/></linearGradient><linearGradient id="bk9" x1="0" y1="0" x2="0" y2="1"><stop offset="0" stop-color="#f6b914"/><stop offset="1" stop-color="#ecaa0c"/></linearGradient></defs><path d="M0 2 Q0 0 2 0 H19.5 Q21.5 0 22.8 1.6 L26 5.3 Q27 6.5 28.5 6.5 H59 Q61 6.5 61 8.5 V45 Q61 47 59 47 H2 Q0 47 0 45 Z" fill="url(#bk9)"/><path d="M2 8.5 H52 L58.5 14.5 V30.5 H2 Z" fill="#f5f5f5"/><path d="M52 8.5 Q52.5 13.5 58.5 14.5" fill="#e6e6e6" stroke="#cfcfcf" stroke-width="0.5"/><text x="15.8" y="33" font-family="Liberation Sans" font-weight="bold" font-size="13" fill="#151515">Ai</text><path d="M0 30.3 Q0 28.3 2 28.3 H22.5 Q24 28.3 25 27 L25.6 26.2 Q26.6 25 28.2 25 H59 Q61 25 61 27 V45 Q61 47 59 47 H2 Q0 47 0 45 Z" fill="url(#fr9)"/><path d="M2 28.6 H22.5 Q24 28.6 25 27.3 L25.6 26.5 Q26.6 25.3 28.2 25.3 H59" stroke="#fff2c0" stroke-width="0.7" fill="none"/></svg>
<div class="t" style="left:149.80px;width:200px;text-align:center;top:331.63px;font-size:9.18px;color:#f2f2f2;transform:scaleX(0.9259);transform-origin:center 50%;">Hack</div>
<svg class="r" style="left:296.3px;top:269.95px" width="61" height="47.6" viewBox="0 0 61 47" preserveAspectRatio="none"><defs><linearGradient id="fr10" x1="0" y1="0" x2="1" y2="1"><stop offset="0" stop-color="#ffe79c"/><stop offset="1" stop-color="#ffcf45"/></linearGradient><linearGradient id="bk10" x1="0" y1="0" x2="0" y2="1"><stop offset="0" stop-color="#f6b914"/><stop offset="1" stop-color="#ecaa0c"/></linearGradient></defs><path d="M0 2 Q0 0 2 0 H19.5 Q21.5 0 22.8 1.6 L26 5.3 Q27 6.5 28.5 6.5 H59 Q61 6.5 61 8.5 V45 Q61 47 59 47 H2 Q0 47 0 45 Z" fill="url(#bk10)"/><path d="M2 8.5 H52 L58.5 14.5 V30.5 H2 Z" fill="#f5f5f5"/><path d="M52 8.5 Q52.5 13.5 58.5 14.5" fill="#e6e6e6" stroke="#cfcfcf" stroke-width="0.5"/><text x="15.8" y="33" font-family="Liberation Sans" font-weight="bold" font-size="13" fill="#151515">Ai</text><path d="M0 30.3 Q0 28.3 2 28.3 H22.5 Q24 28.3 25 27 L25.6 26.2 Q26.6 25 28.2 25 H59 Q61 25 61 27 V45 Q61 47 59 47 H2 Q0 47 0 45 Z" fill="url(#fr10)"/><path d="M2 28.6 H22.5 Q24 28.6 25 27.3 L25.6 26.5 Q26.6 25.3 28.2 25.3 H59" stroke="#fff2c0" stroke-width="0.7" fill="none"/></svg>
<div class="t" style="left:226.80px;width:200px;text-align:center;top:331.63px;font-size:9.18px;color:#f2f2f2;transform:scaleX(0.9259);transform-origin:center 50%;">DejaVuSansMon</div>
<div class="t" style="left:226.80px;width:200px;text-align:center;top:342.13px;font-size:9.18px;color:#f2f2f2;transform:scaleX(0.9259);transform-origin:center 50%;">o</div>
<svg class="r" style="left:373.3px;top:269.95px" width="61" height="47.6" viewBox="0 0 61 47" preserveAspectRatio="none"><defs><linearGradient id="fr11" x1="0" y1="0" x2="1" y2="1"><stop offset="0" stop-color="#ffe79c"/><stop offset="1" stop-color="#ffcf45"/></linearGradient><linearGradient id="bk11" x1="0" y1="0" x2="0" y2="1"><stop offset="0" stop-color="#f6b914"/><stop offset="1" stop-color="#ecaa0c"/></linearGradient></defs><path d="M0 2 Q0 0 2 0 H19.5 Q21.5 0 22.8 1.6 L26 5.3 Q27 6.5 28.5 6.5 H59 Q61 6.5 61 8.5 V45 Q61 47 59 47 H2 Q0 47 0 45 Z" fill="url(#bk11)"/><rect x="2.5" y="8.5" width="55.6" height="22" fill="#f4dca0"/><rect x="13" y="9" width="33" height="21" fill="none" stroke="#f7e7bb" stroke-width="0.8"/><path d="M25 24 L32 23 L33 29 L26 30 Z" fill="#5aa0d0"/><path d="M26 25 L31.5 24.3 L32 26 L26.5 26.5 Z" fill="#cfe6f5"/><path d="M0 30.3 Q0 28.3 2 28.3 H22.5 Q24 28.3 25 27 L25.6 26.2 Q26.6 25 28.2 25 H59 Q61 25 61 27 V45 Q61 47 59 47 H2 Q0 47 0 45 Z" fill="url(#fr11)"/><path d="M2 28.6 H22.5 Q24 28.6 25 27.3 L25.6 26.5 Q26.6 25.3 28.2 25.3 H59" stroke="#fff2c0" stroke-width="0.7" fill="none"/></svg>
<div class="t" style="left:303.80px;width:200px;text-align:center;top:331.63px;font-size:9.18px;color:#f2f2f2;transform:scaleX(0.9259);transform-origin:center 50%;">sftpplug</div>
<svg class="r" style="left:450.3px;top:269.95px" width="61" height="47.6" viewBox="0 0 61 47" preserveAspectRatio="none"><defs><linearGradient id="fr12" x1="0" y1="0" x2="1" y2="1"><stop offset="0" stop-color="#ffe79c"/><stop offset="1" stop-color="#ffcf45"/></linearGradient><linearGradient id="bk12" x1="0" y1="0" x2="0" y2="1"><stop offset="0" stop-color="#f6b914"/><stop offset="1" stop-color="#ecaa0c"/></linearGradient></defs><path d="M0 2 Q0 0 2 0 H19.5 Q21.5 0 22.8 1.6 L26 5.3 Q27 6.5 28.5 6.5 H59 Q61 6.5 61 8.5 V45 Q61 47 59 47 H2 Q0 47 0 45 Z" fill="url(#bk12)"/><rect x="2.5" y="8.5" width="55.6" height="22" fill="#f4dca0"/><path d="M19 12 H35 L42 19 V30 H19 Z" fill="#f7f7f7"/><path d="M35 12 V19 H42" fill="#dedede" stroke="#cfcfcf" stroke-width="0.4"/><path d="M0 30.3 Q0 28.3 2 28.3 H22.5 Q24 28.3 25 27 L25.6 26.2 Q26.6 25 28.2 25 H59 Q61 25 61 27 V45 Q61 47 59 47 H2 Q0 47 0 45 Z" fill="url(#fr12)"/><path d="M2 28.6 H22.5 Q24 28.6 25 27.3 L25.6 26.5 Q26.6 25.3 28.2 25.3 H59" stroke="#fff2c0" stroke-width="0.7" fill="none"/></svg>
<div class="t" style="left:380.80px;width:200px;text-align:center;top:331.63px;font-size:9.18px;color:#f2f2f2;transform:scaleX(0.9259);transform-origin:center 50%;">checksum</div>
<div class="r" style="left:10px;top:355.4px;width:679px;height:54.6px;background:#383838;border-radius:0 0 4px 4px;"></div>
<div class="t" style="left:103.40px;top:366.04px;font-size:9.29px;color:#ececec;transform:scaleX(0.9259);transform-origin:left 50%;">Folder:</div>
<div class="r" style="left:133px;top:362px;width:544px;height:17px;background:#383838;border:1px solid #9c9c9c;box-sizing:border-box;box-shadow:inset 0 0 0 1px #2e2e2e;"></div>
<div class="t" style="left:137.50px;top:366.13px;font-size:9.18px;color:#f0f0f0;transform:scaleX(0.9259);transform-origin:left 50%;">cmder</div>
<div class="r" style="left:528px;top:382.8px;width:76px;height:17.5px;background:#2c2c2c;border:1.4px solid #cfcfcf;border-radius:3px;box-sizing:border-box;"></div>
<div class="t" style="left:466.00px;width:200px;text-align:center;top:387.21px;font-size:8.96px;color:#f0f0f0;transform:scaleX(0.9259);transform-origin:center 50%;">Select Folder</div>
<div class="r" style="left:613.5px;top:382.8px;width:62.5px;height:17.5px;background:#2c2c2c;border:1px solid #8c8c8c;border-radius:3px;box-sizing:border-box;"></div>
<div class="t" style="left:544.70px;width:200px;text-align:center;top:387.21px;font-size:8.96px;color:#f0f0f0;transform:scaleX(0.9259);transform-origin:center 50%;">Cancel</div>
<svg class="r" style="left:68px;top:409.5px" width="16" height="4" viewBox="0 0 16 4"><path d="M0.8 1 Q3.8 3.6 6.8 1 M8.6 1 Q11.6 3.6 14.6 1" stroke="#9a9a9a" stroke-width="1.1" fill="none"/></svg>
<div class="r" style="left:135px;top:410.5px;width:1.5px;height:1.5px;background:#8a8a8a;"></div>
<div class="r" style="left:685px;top:401.5px;width:1.3px;height:1.3px;background:#bdbdbd;"></div>
<div class="r" style="left:685px;top:404px;width:1.3px;height:1.3px;background:#bdbdbd;"></div>
<div class="r" style="left:685px;top:406.5px;width:1.3px;height:1.3px;background:#bdbdbd;"></div>
<div class="r" style="left:682.5px;top:404px;width:1.3px;height:1.3px;background:#bdbdbd;"></div>
<div class="r" style="left:682.5px;top:406.5px;width:1.3px;height:1.3px;background:#bdbdbd;"></div>
<div class="r" style="left:680px;top:406.5px;width:1.3px;height:1.3px;background:#bdbdbd;"></div>
</body></html>
